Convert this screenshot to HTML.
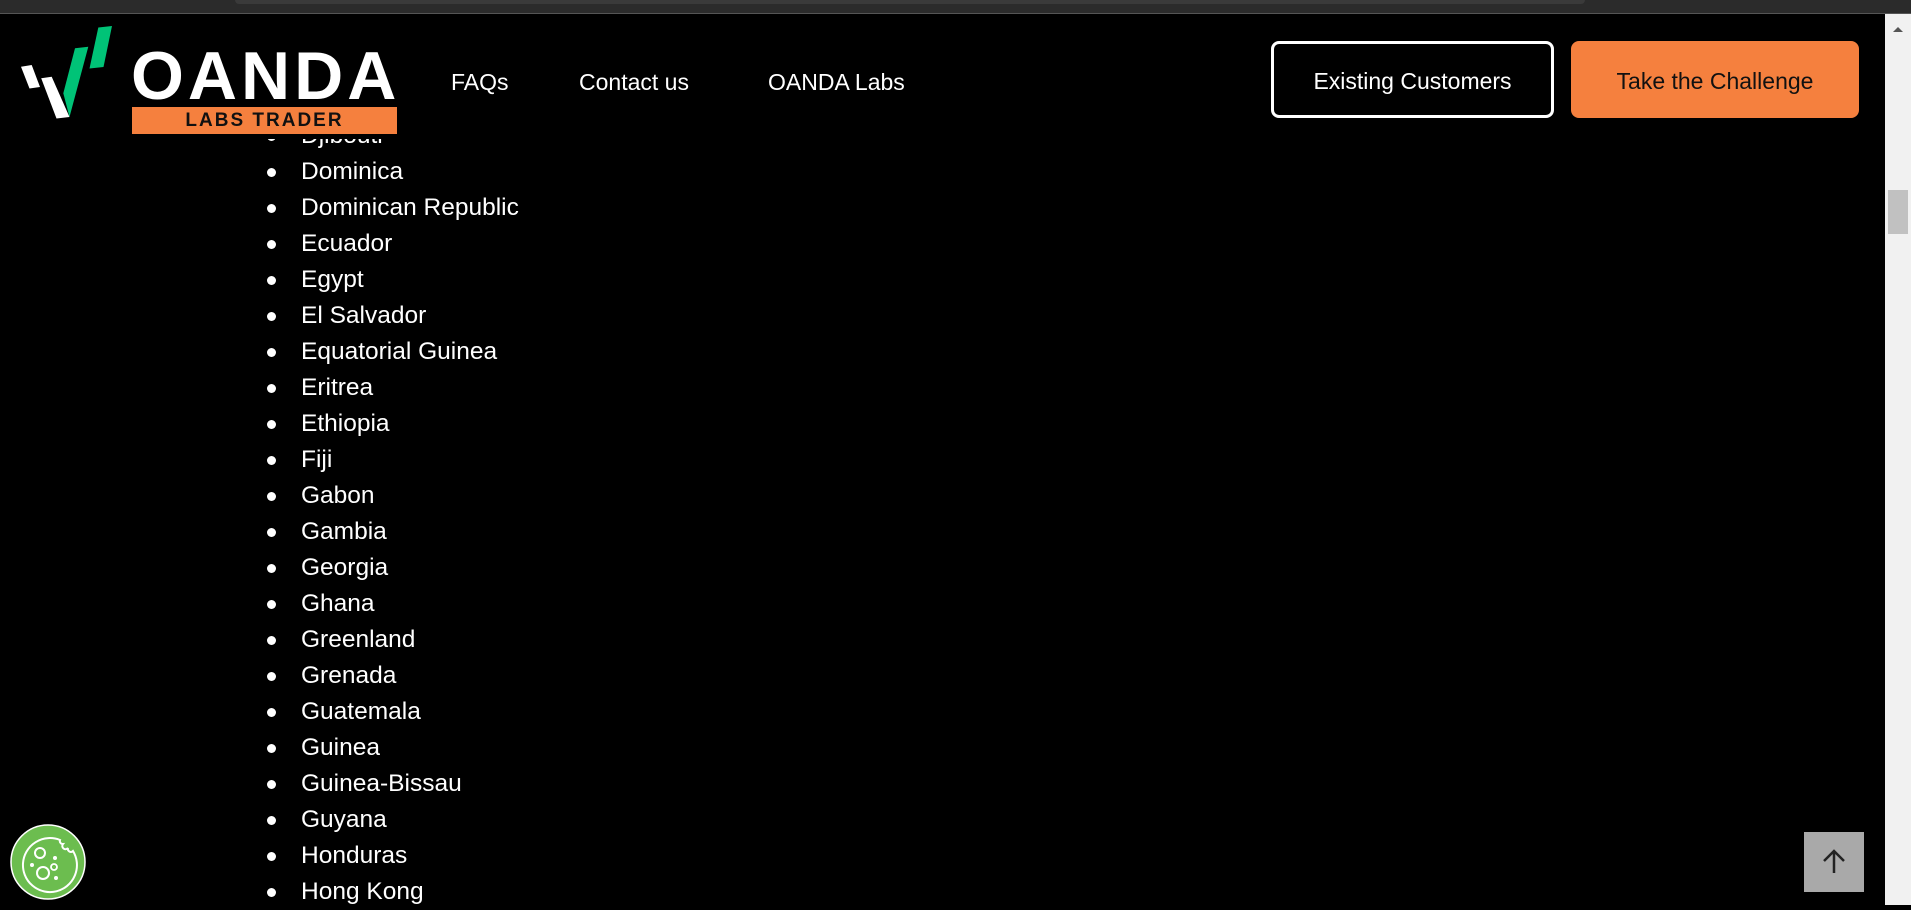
<!DOCTYPE html>
<html><head><meta charset="utf-8"><style>
html,body{margin:0;padding:0;background:#000;width:1911px;height:905px;overflow:hidden;font-family:"Liberation Sans",sans-serif;color:#fff}
.top{position:absolute;left:0;top:0;width:1911px;height:13px;background:#2b2b2b;border-bottom:1px solid #555;z-index:5}
.tab{position:absolute;left:235px;top:0;width:1350px;height:4px;background:#3a3a3a;border-radius:0 0 8px 8px}
.hdr{position:absolute;left:0;top:14px;width:1885px;height:125px;background:#000;z-index:4}
.nav{position:absolute;font-size:23px;color:#fff}
.btn{position:absolute;height:77px;box-sizing:border-box;border-radius:8px;font-size:23px;display:flex;align-items:center;justify-content:center;padding-top:4px}
ul{position:absolute;left:0;top:118px;margin:0;padding:0 0 0 301px;list-style:none;font-size:24.5px;line-height:36px;z-index:1}
li{position:relative}
li:before{content:"";position:absolute;left:-34px;top:14px;width:9px;height:9px;border-radius:50%;background:#fff}
.sb{position:absolute;left:1885px;top:14px;width:26px;height:891px;background:#f1f1f1;z-index:6}
.thumb{position:absolute;left:3px;top:176px;width:20px;height:44px;background:#c1c1c1}
</style></head><body>
<div class="top"><div class="tab"></div></div>
<div class="hdr">
<div style="position:absolute;left:131px;top:27px;font-size:68px;font-weight:bold;letter-spacing:4px;line-height:70px">OANDA</div>
<div style="position:absolute;left:132px;top:93px;width:265px;height:27px;background:#f5803e;color:#111;font-weight:bold;font-size:19px;letter-spacing:2px;text-align:center;line-height:28px">LABS TRADER</div>
<div class="nav" style="left:451px;top:55px">FAQs</div>
<div class="nav" style="left:579px;top:55px">Contact us</div>
<div class="nav" style="left:768px;top:55px">OANDA Labs</div>
<div class="btn" style="left:1271px;top:27px;width:283px;border:3px solid #fff;color:#fff">Existing Customers</div>
<div class="btn" style="left:1571px;top:27px;width:288px;background:#f5803e;color:#111">Take the Challenge</div>
</div>
<svg style="position:absolute;left:0;top:0;z-index:5" width="130" height="130" viewBox="0 0 130 130">
<polygon points="21,66.7 31.7,65 40,87 29.5,88.5" fill="#fff"/>
<polygon points="41.2,78.3 51.7,76.7 69.5,117 56.5,118.5" fill="#fff"/>
<polygon points="75,48.3 88.3,46.7 69.5,117 63.3,93.3" fill="#00c377"/>
<polygon points="98.3,27.5 112,26 103.5,67 89.5,68.5" fill="#00c377"/>
</svg>
<ul>
<li>Djibouti</li><li>Dominica</li><li>Dominican Republic</li><li>Ecuador</li><li>Egypt</li><li>El Salvador</li><li>Equatorial Guinea</li><li>Eritrea</li><li>Ethiopia</li><li>Fiji</li><li>Gabon</li><li>Gambia</li><li>Georgia</li><li>Ghana</li><li>Greenland</li><li>Grenada</li><li>Guatemala</li><li>Guinea</li><li>Guinea-Bissau</li><li>Guyana</li><li>Honduras</li><li>Hong Kong</li>
</ul>
<svg style="position:absolute;left:10px;top:824px;z-index:3" width="76" height="76" viewBox="0 0 76 76">
<circle cx="38" cy="38" r="37" fill="#6cbd4f" stroke="#fff" stroke-width="1.5"/>
<path d="M53 20 a3 3 0 0 0 5 4 a3 3 0 0 0 5 3 A27 27 0 1 1 50 16 a3 3 0 0 0 3 4z" fill="none" stroke="#fff" stroke-width="2"/>
<circle cx="30" cy="29" r="5" fill="none" stroke="#fff" stroke-width="2"/>
<circle cx="33" cy="49" r="6" fill="none" stroke="#fff" stroke-width="2"/>
<circle cx="44" cy="43" r="3" fill="none" stroke="#fff" stroke-width="1.8"/>
<circle cx="22" cy="41" r="2" fill="#fff"/><circle cx="45" cy="34" r="2" fill="#fff"/><circle cx="46" cy="54" r="2" fill="#fff"/>
</svg>
<div style="position:absolute;left:1804px;top:832px;width:60px;height:60px;background:#a9a9a9;z-index:3">
<svg width="60" height="60" viewBox="0 0 60 60"><path d="M30 41V19M20 29l10-10 10 10" fill="none" stroke="#222" stroke-width="2.5"/></svg></div>
<div class="sb"><div style="position:absolute;left:8px;top:13px;width:0;height:0;border-left:5px solid transparent;border-right:5px solid transparent;border-bottom:5px solid #555"></div><div class="thumb"></div></div>
</body></html>
